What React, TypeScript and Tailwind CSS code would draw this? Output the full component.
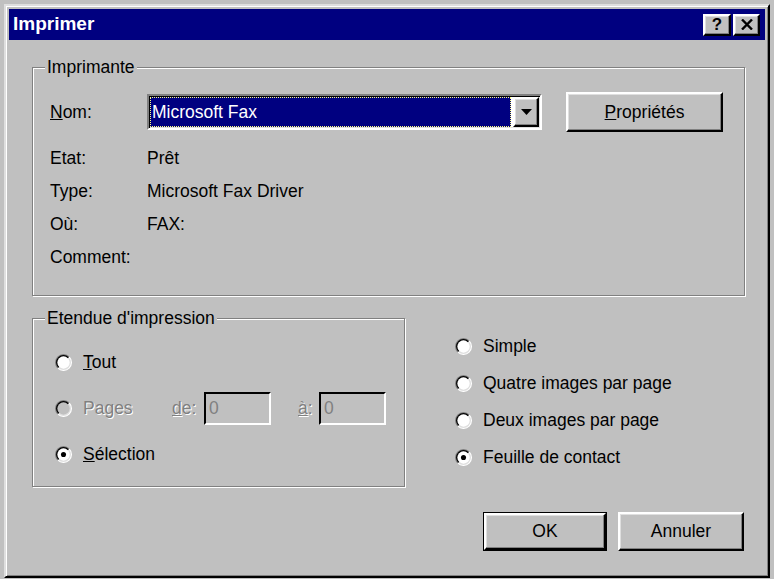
import type { ReactNode } from "react";

// Win95-style print dialog ("Imprimer")

const raised =
  "border-2 border-t-white border-l-white border-r-black border-b-black shadow-[inset_-1px_-1px_0_#808080,inset_1px_1px_0_#dfdfdf]";
const sunken =
  "border-2 border-t-[#808080] border-l-[#808080] border-r-white border-b-white shadow-[inset_1px_1px_0_#000,inset_-1px_-1px_0_#dfdfdf]";
const disabledText = "text-[#808080] [text-shadow:1px_1px_0_#fff]";

function Group({ label, className, children }: { label: string; className: string; children: ReactNode }) {
  return (
    <div className={`relative border border-[#808080] shadow-[inset_1px_1px_0_#fff,1px_1px_0_#fff] ${className}`}>
      <span className="absolute -top-[11px] left-[12px] bg-[#c0c0c0] px-[2px] leading-[20px]">{label}</span>
      {children}
    </div>
  );
}

function Radio({ checked = false, disabled = false }: { checked?: boolean; disabled?: boolean }) {
  return (
    <svg width="17" height="17" viewBox="0 0 16 16" className="shrink-0">
      <path d="M13.66 2.34 A8 8 0 0 1 2.34 13.66 Z" fill="#fff" />
      <path d="M2.34 13.66 A8 8 0 0 1 13.66 2.34 Z" fill="#808080" />
      <path d="M12.95 3.05 A7 7 0 0 1 3.05 12.95 Z" fill="#dfdfdf" />
      <path d="M3.05 12.95 A7 7 0 0 1 12.95 3.05 Z" fill="#000" />
      <circle cx="8" cy="8" r="5.8" fill={disabled ? "#c0c0c0" : "#fff"} />
      {checked && <circle cx="8" cy="8" r="2.4" fill="#000" />}
    </svg>
  );
}

function RadioRow({
  label,
  checked,
  disabled,
  className = "",
}: {
  label: ReactNode;
  checked?: boolean;
  disabled?: boolean;
  className?: string;
}) {
  return (
    <div className={`flex items-center ${className}`}>
      <Radio checked={checked} disabled={disabled} />
      <span className={`ml-[11px] ${disabled ? disabledText : ""}`}>{label}</span>
    </div>
  );
}

function Button({ children, className = "", isDefault = false }: { children: ReactNode; className?: string; isDefault?: boolean }) {
  const inner = <div className={`flex h-full w-full items-center justify-center bg-[#c0c0c0] ${raised}`}>{children}</div>;
  if (isDefault) return <div className={`border border-black ${className}`}>{inner}</div>;
  return <div className={className}>{inner}</div>;
}

function DisabledInput({ className = "" }: { className?: string }) {
  return (
    <div
      className={`flex h-[33px] w-[67px] items-center bg-[#c0c0c0] pl-[3px] border-2 border-t-[#000] border-l-[#000] border-r-white border-b-white ${className}`}
    >
      <span className="text-[#808080]">0</span>
    </div>
  );
}

export default function App() {
  const infos = [
    ["Etat:", "Prêt"],
    ["Type:", "Microsoft Fax Driver"],
    ["Où:", "FAX:"],
    ["Comment:", ""],
  ];

  return (
    <div className="h-[579px] w-[774px] bg-[#c0c0c0] pt-[4px] pl-[4px] pr-[4px] pb-[1px] font-['Liberation_Sans',Arial,sans-serif] text-[17.5px] text-black">
      <div className="flex h-full flex-col border-2 border-t-[#dfdfdf] border-l-[#dfdfdf] border-r-[#000] border-b-[#000] p-[3px] shadow-[inset_1px_1px_0_#fff,inset_-1px_-1px_0_#808080]">
        {/* barre de titre */}
        <div className="flex h-[31px] items-center justify-between bg-[#000080] pl-[4px] pr-[5px]">
          <span className="text-[19px] font-bold text-white">Imprimer</span>
          <div className="flex gap-[2px]">
            <div className={`flex h-[22px] w-[28px] items-center justify-center bg-[#c0c0c0] ${raised}`}>
              <span className="text-[17px] font-bold leading-none">?</span>
            </div>
            <div className={`flex h-[22px] w-[27px] items-center justify-center bg-[#c0c0c0] ${raised}`}>
              <svg width="12" height="11" viewBox="0 0 12 11">
                <path d="M1 0.5 L11 10.5 M11 0.5 L1 10.5" stroke="#000" strokeWidth="2.4" />
              </svg>
            </div>
          </div>
        </div>

        <div className="flex flex-col pl-[23px] pt-[27px]">
          <Group label="Imprimante" className="h-[229px] w-[713px] pl-[17px] pt-[24px]">
            <div className="flex h-[40px] items-center">
              <span className="w-[97px]">
                <u>N</u>om:
              </span>
              <div className={`flex h-[36px] w-[395px] bg-white p-px ${sunken}`}>
                <div className="flex flex-1 items-center border border-dotted border-[#ffff80] bg-[#000080] pl-[1px] text-white">
                  Microsoft Fax
                </div>
                <div className={`ml-[2px] flex w-[26px] items-center justify-center bg-[#c0c0c0] ${raised}`}>
                  <svg width="11" height="6" viewBox="0 0 11 6">
                    <polygon points="0,0 11,0 5.5,6" fill="#000" />
                  </svg>
                </div>
              </div>
              <Button className="ml-[24px] h-[40px] w-[157px]">
                <span>
                  <u>P</u>ropriétés
                </span>
              </Button>
            </div>
            <div className="mt-[10px] flex flex-col">
              {infos.map(([k, v]) => (
                <div key={k} className="flex h-[33px] items-center">
                  <span className="w-[97px]">{k}</span>
                  <span>{v}</span>
                </div>
              ))}
            </div>
          </Group>

          <div className="mt-[22px] flex">
            <Group label="Etendue d'impression" className="h-[169px] w-[373px] pl-[22px] pt-[20px]">
              <RadioRow
                className="h-[46px]"
                label={
                  <>
                    <u>T</u>out
                  </>
                }
              />
              <div className="flex h-[46px] items-center">
                <Radio disabled />
                <span className={`ml-[11px] w-[89px] ${disabledText}`}>Pages</span>
                <span className={`w-[32px] ${disabledText}`}>
                  <u>d</u>e:
                </span>
                <DisabledInput />
                <span className={`ml-[27px] w-[21px] ${disabledText}`}>
                  <u>à</u>:
                </span>
                <DisabledInput />
              </div>
              <RadioRow
                className="h-[46px]"
                checked
                label={
                  <>
                    <u>S</u>élection
                  </>
                }
              />
            </Group>

            <div className="ml-[50px] mt-[10px] flex flex-col">
              <RadioRow className="h-[37px]" label="Simple" />
              <RadioRow className="h-[37px]" label="Quatre images par page" />
              <RadioRow className="h-[37px]" label="Deux images par page" />
              <RadioRow className="h-[37px]" checked label="Feuille de contact" />
            </div>
          </div>

          <div className="ml-[451px] mt-[25px] flex gap-[11px]">
            <Button isDefault className="h-[39px] w-[124px]">
              OK
            </Button>
            <Button className="h-[39px] w-[126px]">Annuler</Button>
          </div>
        </div>
      </div>
    </div>
  );
}
